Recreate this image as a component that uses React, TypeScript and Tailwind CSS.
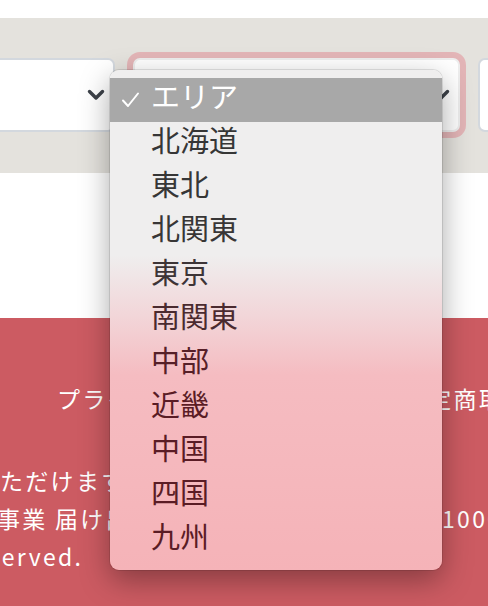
const areas = [
  { label: "北海道", color: "text-[#363636]" },
  { label: "東北", color: "text-[#363636]" },
  { label: "北関東", color: "text-[#383636]" },
  { label: "東京", color: "text-[#3d3436]" },
  { label: "南関東", color: "text-[#4a2a2f]" },
  { label: "中部", color: "text-[#562028]" },
  { label: "近畿", color: "text-[#5a1c25]" },
  { label: "中国", color: "text-[#5a1c25]" },
  { label: "四国", color: "text-[#5a1c25]" },
  { label: "九州", color: "text-[#5a1c25]" },
];

export default function App() {
  return (
    <div className="relative flex min-h-screen flex-col overflow-hidden bg-white font-['Noto_Sans_CJK_JP','Noto_Sans',sans-serif]">
      <div className="h-[18px] shrink-0 bg-white" />

      {/* Filter bar */}
      <section className="h-[155px] shrink-0 bg-[#e4e2dd] pt-[40px]">
        <div className="-ml-[212px] flex gap-[18px]">
          <SelectBox />
          <SelectBox focused />
          <SelectBox />
        </div>
      </section>

      <div className="h-[145px] shrink-0 bg-white" />

      {/* Footer */}
      <footer className="h-[288px] shrink-0 bg-[#cc5b62] pt-[61px] text-[23px] leading-[38px] tracking-[0.1em] text-white">
        <div className="flex whitespace-nowrap pl-[57px]">
          <span className="w-[346px] shrink-0">プライバシーポリシー</span>
          <span>特定商取引法に基づく表記</span>
        </div>
        <div className="mt-[44px] whitespace-nowrap">ただけます。</div>
        <div className="flex whitespace-nowrap">
          <span className="-ml-[3px] w-[445px] shrink-0">事業 届け出番号</span>
          <span>1000000号</span>
        </div>
        <div className="-ml-[43px] whitespace-nowrap">Reserved.</div>
      </footer>

      {/* Native dropdown menu */}
      <div className="absolute left-[110px] top-[70px] w-[332px] rounded-[9px] bg-[linear-gradient(to_bottom,#efeeee_0%,#efeeee_37%,#f2d6d9_49%,#f5bcc1_61%,#f5b3b8_100%)] py-[8px] shadow-[0_10px_30px_rgba(0,0,0,0.35)] ring-1 ring-black/10">
        <div className="flex h-[44px] items-center bg-[#a8a8a8] pb-[9px] text-[29px] text-white">
          <span className="flex w-[41px] justify-end pr-[11px] pt-[9px]">
            <svg width="19" height="16" viewBox="0 0 19 16" fill="none">
              <path d="M2 8.5l5 5.5L17 1.5" stroke="currentColor" strokeWidth="2" strokeLinecap="round" strokeLinejoin="round" />
            </svg>
          </span>
          <span>エリア</span>
        </div>
        {areas.map((a) => (
          <div key={a.label} className={`flex h-[44px] items-center pb-[8px] pl-[41px] text-[29px] ${a.color}`}>
            {a.label}
          </div>
        ))}
      </div>
    </div>
  );
}

function SelectBox({ focused = false }: { focused?: boolean }) {
  return (
    <div
      className={`relative flex h-[74px] w-[327px] shrink-0 items-center justify-end rounded-[7px] border-2 bg-white pr-[8px] ${
        focused ? "border-[#eeeeee] ring-[6px] ring-[#e3b5b7]" : "border-[#d3d8de]"
      }`}
    >
      <ChevronIcon />
    </div>
  );
}

function ChevronIcon() {
  return (
    <svg width="18" height="12" viewBox="0 0 18 12" fill="none" xmlns="http://www.w3.org/2000/svg">
      <path d="M2.5 2.5L9 9l6.5-6.5" stroke="#3d4249" strokeWidth="3.4" strokeLinecap="round" strokeLinejoin="round" />
    </svg>
  );
}
